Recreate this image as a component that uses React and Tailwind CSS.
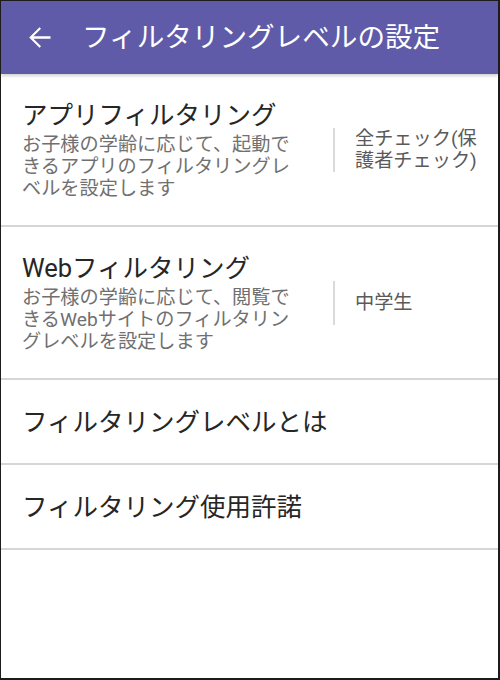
import React from 'react';

const font = { fontFamily: 'Roboto, "Noto Sans CJK JP", sans-serif' };

const BackArrow = () => (
  <svg width="33" height="33" viewBox="0 0 24 24" fill="white">
    <path d="M20 11.1H7.6l5.5-5.5L12 4.5 4.5 12l7.5 7.5 1.1-1.1-5.5-5.5H20v-1.8z" />
  </svg>
);

const SettingRow = ({ title, desc, value }) => (
  <div className="h-[153px] border-b-2 border-[#d6d6d6] grid grid-cols-[332px_2px_1fr] items-center">
    <div className="pl-[21px] pr-[36px]">
      <div className="text-[25.5px] leading-[30px] text-[#262626]">{title}</div>
      <div className="mt-[4px] text-[19.2px] leading-[22px] text-[#707070]">{desc}</div>
    </div>
    <div className="h-[44px] w-[2px] bg-[#dadada]"></div>
    <div className="pl-[20px] pr-[10px] text-[19.2px] leading-[22px] text-[#5a5a5a]">{value}</div>
  </div>
);

const LinkRow = ({ title }) => (
  <div className="h-[85px] border-b-2 border-[#d6d6d6] flex items-center pl-[21px]">
    <span className="text-[25.5px] leading-[30px] text-[#262626]">{title}</span>
  </div>
);

export default function App() {
  return (
    <div
      style={font}
      className="w-[500px] h-[680px] bg-white border-[#1c1c1c] border-l border-t border-r-2 border-b-2 flex flex-col overflow-hidden"
    >
      <header className="h-[73px] shrink-0 bg-[#5f5ba9] flex items-center pl-[22px] relative z-10 shadow-[0_2px_3px_rgba(0,0,0,0.18)]">
        <BackArrow />
        <h1 className="ml-[26px] text-[27.6px] text-white font-normal leading-none">フィルタリングレベルの設定</h1>
      </header>
      <div className="flex flex-col">
        <SettingRow
          title="アプリフィルタリング"
          desc="お子様の学齢に応じて、起動できるアプリのフィルタリングレベルを設定します"
          value="全チェック(保護者チェック)"
        />
        <SettingRow
          title="Webフィルタリング"
          desc="お子様の学齢に応じて、閲覧できるWebサイトのフィルタリングレベルを設定します"
          value="中学生"
        />
        <LinkRow title="フィルタリングレベルとは" />
        <LinkRow title="フィルタリング使用許諾" />
      </div>
    </div>
  );
}
